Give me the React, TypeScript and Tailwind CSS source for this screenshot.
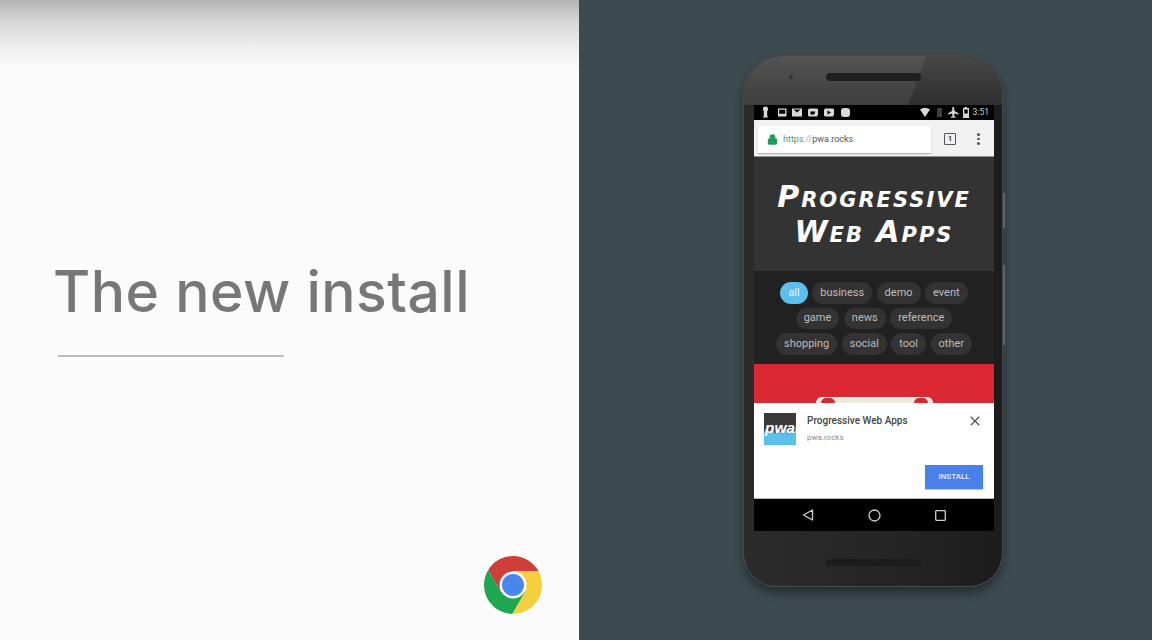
import React from 'react';
import { Lock, X } from 'lucide-react';

const chipRows = [
  ['all', 'business', 'demo', 'event'],
  ['game', 'news', 'reference'],
  ['shopping', 'social', 'tool', 'other'],
];

const ChromeLogo = () => (
  <svg width="58" height="58" viewBox="-29 -29 58 58">
    <path d="M0 -14 L25.4 -14 A29 29 0 0 0 -24.8 -15 L-12.1 7 Z" fill="#cd3f38" />
    <path d="M-12.1 7 L-24.8 -15 A29 29 0 0 0 -0.6 29 L12.1 7 Z" fill="#1fa650" />
    <path d="M12.1 7 L-0.6 29 A29 29 0 0 0 25.4 -14 L0 -14 Z" fill="#f6cf3f" />
    <circle r="13.5" fill="#fff" />
    <circle r="11" fill="#4a85ec" />
  </svg>
);

const StatusIcons = () => (
  <div className="flex items-center h-[15px] pl-[7px] pr-[5px] bg-black text-[#d8d8d8]">
    <svg width="90" height="15" viewBox="0 0 90 15" fill="currentColor">
      <path d="M2 3.5a2.5 2 0 0 1 5 0v1.5l-.8 1v5.5h.8v1H2v-1h.8V6L2 5z" />
      <path fillRule="evenodd" d="M17 3.5h8.5v8H17zM18.2 4.7v4h6v-4z" />
      <path fillRule="evenodd" d="M31 3.5h10v8H31zM32.5 4.5l3.5 3 3.5-3z" />
      <path fillRule="evenodd" d="M47 5l1-1.500h8l1 1v5l-1 2h-8l-1-1zM49.5 6.5v3h3.5l1.5-3z" />
      <path fillRule="evenodd" d="M63 5l1-1.500h8l1 1v5l-1 2h-8l-1-1zM66.5 5.5v4l3.5-2z" />
      <rect x="80" y="3" width="9" height="9" rx="3" />
    </svg>
    <div className="flex items-center ml-auto">
      <svg width="50" height="15" viewBox="0 0 50 15" fill="currentColor">
        <path d="M0 4.5a8.5 8.5 0 0 1 10 0L5 12z" />
        <path d="M17 3h5v9h-5z" opacity="0.3" />
        <path d="M32.5 2h1.5l.5 4 4 2.2v1.3l-4-1-.4 2.5 1.4 1v1l-2.2-.6-2.200.6v-1l1.400-1-.4-2.500-4 1V8.200l4-2.200z" />
        <path fillRule="evenodd" d="M43 3h1.500V2h2.500v1H49v10h-6zM44.300 4.500v4h3.400v-4z" />
      </svg>
      <span className="text-[8.5px] leading-none font-['Roboto',sans-serif] text-[#cfcfcf] ml-[3px]">3:51</span>
    </div>
  </div>
);

const Toolbar = () => (
  <div className="flex items-center h-[37px] pt-[2px] pl-[4px] bg-[#f1f1f1] border-b border-[#8f8f8f]">
    <div className="flex items-center w-[173px] h-[27px] pl-[9px] bg-white shadow-[0_1px_1px_rgba(0,0,0,0.25)]">
      <Lock size={11} strokeWidth={2.5} className="text-[#1f9d55] fill-[#1f9d55]" />
      <span className="ml-[5px] mt-[1px] text-[9px] font-['Roboto',sans-serif] text-[#555]">
        <span className="text-[#3fa36b]">https</span>
        <span className="text-[#aaa]">://</span>pwa.rocks
      </span>
    </div>
    <div className="flex items-center justify-center ml-[13px] w-[12px] h-[12px] border-[1.5px] border-[#555] rounded-[1px] text-[8px] leading-none font-bold font-['Roboto',sans-serif] text-[#444]">
      1
    </div>
    <div className="flex flex-col gap-[2px] ml-[21px]">
      <span className="w-[2.5px] h-[2.5px] rounded-full bg-[#555]" />
      <span className="w-[2.5px] h-[2.5px] rounded-full bg-[#555]" />
      <span className="w-[2.5px] h-[2.5px] rounded-full bg-[#555]" />
    </div>
  </div>
);

const Chips = () => (
  <div className="flex flex-col items-center h-[93px] pt-[11px] gap-[4px] bg-[#212121]">
    {chipRows.map((row) => (
      <div key={row[0]} className="flex gap-[4.5px]">
        {row.map((chip) => (
          <span
            key={chip}
            className={
              chip === 'all'
                ? 'flex items-center h-[21.5px] px-[8px] rounded-full bg-[#5bc0eb] text-[#e8f6fc] text-[11px] font-["Roboto",sans-serif]'
                : 'flex items-center h-[21.5px] px-[8px] rounded-full bg-[#333] text-[#bdbdbd] text-[11px] font-["Roboto",sans-serif]'
            }
          >
            {chip}
          </span>
        ))}
      </div>
    ))}
  </div>
);

const PwaIcon = () => (
  <svg width="32" height="32" viewBox="0 0 32 32" className="shrink-0">
    <rect width="32" height="32" fill="#5bc0eb" />
    <path d="M0 0H32V13L30 21L27 16L24 21L21 15L18 21L14 15L11 21L8 15L5 20L2 16L0 20Z" fill="#3a3a3a" />
    <text
      x="1"
      y="20"
      textLength="30"
      lengthAdjust="spacingAndGlyphs"
      fontFamily="Liberation Sans"
      fontWeight="700"
      fontStyle="italic"
      fontSize="15"
      fill="#fff"
    >
      pwa
    </text>
  </svg>
);

const InstallSheet = () => (
  <div className="flex flex-col h-[96px] bg-white border-b border-[#bbb]">
    <div className="flex pt-[10px] pl-[10px] pr-[11px]">
      <PwaIcon />
      <div className="ml-[11px] font-['Roboto',sans-serif]">
        <div className="text-[10px] leading-[14px] mt-[1px] font-medium text-[#444]">Progressive Web Apps</div>
        <div className="text-[8px] leading-[12px] mt-[4px] text-[#8a8a8a]">pwa.rocks</div>
      </div>
      <X size={16} strokeWidth={1.75} className="ml-auto text-[#555]" />
    </div>
    <div className="flex justify-end mt-[20px] pr-[11px]">
      <button className="w-[58px] h-[24px] bg-[#4a80ec] text-[#e4ecfc] text-[8px] font-medium font-['Roboto',sans-serif] shadow-[0_1px_1px_rgba(0,0,0,0.2)]">
        INSTALL
      </button>
    </div>
  </div>
);

const NavBar = () => (
  <div className="flex items-center justify-between h-[32px] pl-[48px] pr-[48px] bg-black">
    <svg width="12" height="12" viewBox="0 0 12 12" fill="none" stroke="#d0d0d0" strokeWidth="1.3">
      <path d="M10.5 1V11L1.5 6Z" strokeLinejoin="round" />
    </svg>
    <svg width="13" height="13" viewBox="0 0 13 13" fill="none" stroke="#d0d0d0" strokeWidth="1.3">
      <circle cx="6.5" cy="6.5" r="5.5" />
    </svg>
    <svg width="11" height="11" viewBox="0 0 11 11" fill="none" stroke="#d0d0d0" strokeWidth="1.3">
      <rect x="0.7" y="0.7" width="9.6" height="9.6" rx="0.8" />
    </svg>
  </div>
);

const Phone = () => (
  <div className="flex flex-col w-[260px] h-[532px] rounded-t-[40px] rounded-b-[34px] overflow-hidden border border-[#484b4c] bg-[linear-gradient(90deg,#2b2b2b,#262626_50%,#1c1c1c)]">
    <div className="relative flex items-start justify-center h-[49px] shrink-0 pt-[17px] bg-[linear-gradient(110deg,rgba(255,255,255,0.07)_66%,transparent_66%),linear-gradient(180deg,#474747,#2f2f2f)]">
      <span className="absolute left-[45px] top-[19px] w-[4px] h-[4px] rounded-full bg-[#333]" />
      <div className="w-[95px] h-[8px] rounded-full bg-[#1f1f1f]" />
    </div>
    <div className="w-[240px] mx-[10px]">
      <StatusIcons />
      <Toolbar />
      <div className="flex flex-col items-center justify-center h-[114px] bg-[#333] text-white font-['DejaVu_Sans',sans-serif] font-bold italic text-[30px] leading-[35px] tracking-[2px] [font-variant:small-caps]">
        <div>Progressive</div>
        <div>Web Apps</div>
      </div>
      <Chips />
      <div className="flex justify-center items-end h-[39px] bg-[#dc2832]">
        <div className="flex justify-between w-[117px] h-[6px] px-[4px] rounded-t-[6px] bg-[#ecebdd] border-t border-x border-white">
          <span className="w-[14px] h-[5px] rounded-t-full bg-[#dc2832]" />
          <span className="w-[14px] h-[5px] rounded-t-full bg-[#dc2832]" />
        </div>
      </div>
      <InstallSheet />
      <NavBar />
    </div>
    <div className="flex items-center justify-center mt-[28px]">
      <div className="w-[95px] h-[7px] rounded-full bg-[#1c1c1c]" />
    </div>
  </div>
);

export default function App() {
  return (
    <div className="flex w-[1152px] h-[640px] overflow-hidden">
      <div className="flex flex-col w-[579px] bg-[#fbfbfb]">
        <div className="h-[70px] bg-[linear-gradient(180deg,#b4b4b4_0%,#d8d8d8_32%,#f0f0f0_70%,#fbfbfb_100%)]" />
        <h1 className="mt-[187px] pl-[53px] text-[57px] leading-[70px] tracking-[0.5px] font-medium text-[#777] font-['Inter',sans-serif]">
          The new install
        </h1>
        <div className="ml-[58px] mt-[28px] w-[226px] h-[2px] bg-[#bdbdbd]" />
        <div className="flex justify-end mt-[199px] pr-[37px]">
          <ChromeLogo />
        </div>
      </div>
      <div className="flex-1 pl-[164px] pt-[55px] bg-[#3c4b50]">
        <div className="relative w-[260px] rounded-t-[40px] rounded-b-[34px] shadow-[0_6px_10px_rgba(0,0,0,0.4)]">
          <span className="absolute -right-[2px] top-[138px] w-[2px] h-[35px] bg-[#5c6366]" />
          <span className="absolute -right-[2px] top-[210px] w-[2px] h-[80px] bg-[#5c6366]" />
          <Phone />
        </div>
      </div>
    </div>
  );
}
